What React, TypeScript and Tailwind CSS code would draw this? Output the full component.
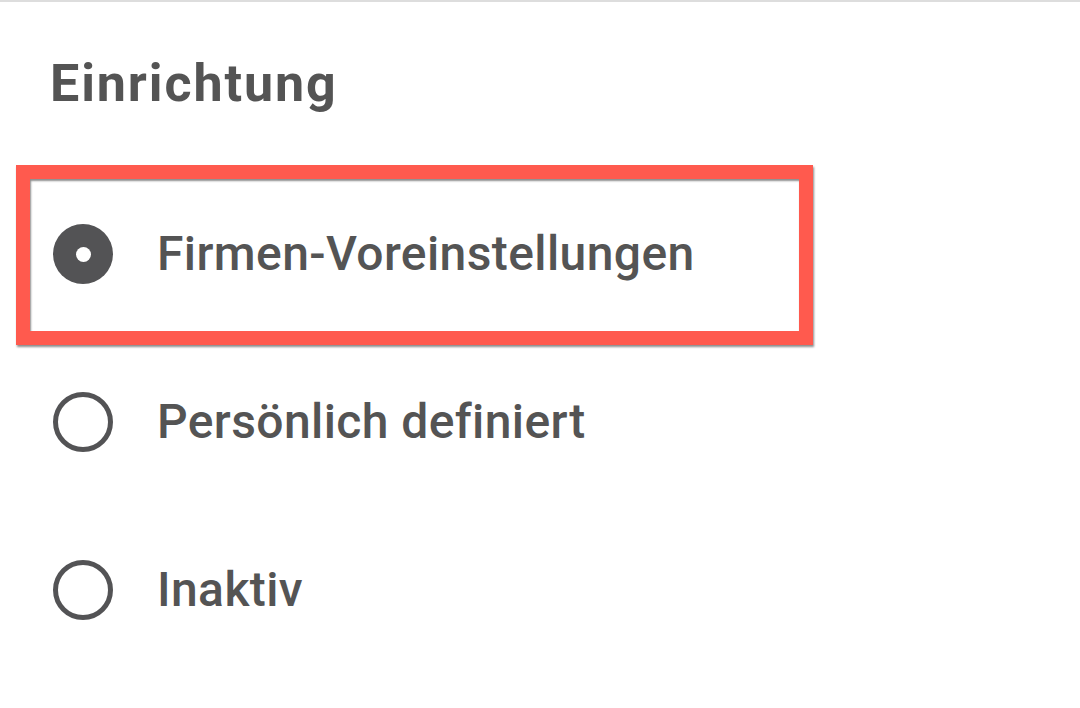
const OPTIONS = [
  { label: "Firmen-Voreinstellungen", checked: true },
  { label: "Persönlich definiert", checked: false },
  { label: "Inaktiv", checked: false },
];

function Radio({ checked }: { checked: boolean }) {
  if (checked) {
    return (
      <span className="grid h-[60px] w-[60px] shrink-0 place-items-center rounded-full bg-[#535355]">
        <span className="h-[15px] w-[15px] rounded-full bg-white" />
      </span>
    );
  }
  return <span className="h-[60px] w-[60px] shrink-0 rounded-full border-[5px] border-[#535355]" />;
}

export default function App() {
  return (
    <div
      className="h-[708px] w-[1080px] overflow-hidden bg-white text-[#545454]"
      style={{ fontFamily: "Roboto, 'Noto Sans', sans-serif" }}
    >
      <div className="h-[2px] w-full bg-[#dddddd]" />
      <h1 className="ml-[50px] mt-[56px] text-[52px] font-bold leading-[52px] tracking-[1.9px]">Einrichtung</h1>

      <div className="mt-[60px] flex flex-col">
        {OPTIONS.map((opt, i) => (
          <div key={opt.label} className="relative flex h-[168px] items-center gap-[44px] pl-[53px]">
            {i === 0 && (
              <span className="pointer-events-none absolute left-[16px] top-[-5px] h-[180px] w-[797px] border-[14px] border-[#ff5a4e] shadow-[1px_2px_2px_rgba(0,0,0,0.45),inset_1px_2px_2px_rgba(0,0,0,0.45)]" />
            )}
            <Radio checked={opt.checked} />
            <span className="text-[48px] font-medium leading-[48px] tracking-[0.4px]">{opt.label}</span>
          </div>
        ))}
      </div>
    </div>
  );
}
